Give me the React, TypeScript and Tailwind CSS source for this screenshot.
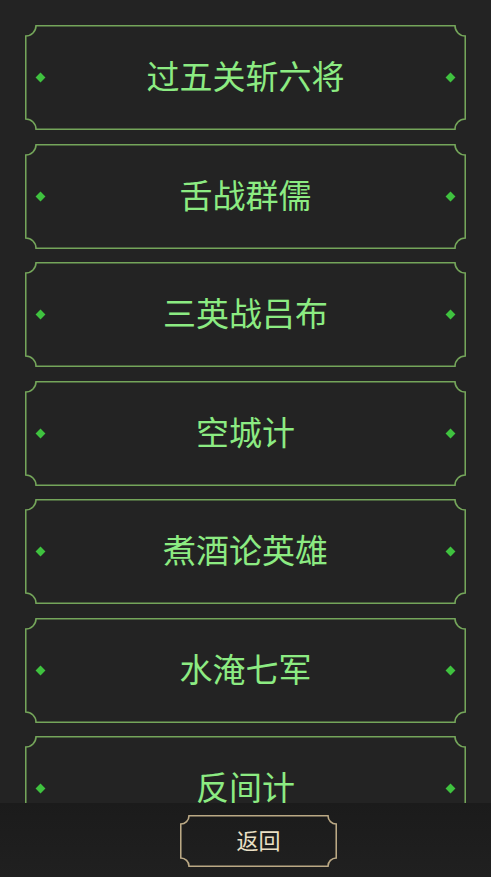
import React from "react";

const stories = ["过五关斩六将", "舌战群儒", "三英战吕布", "空城计", "煮酒论英雄", "水淹七军", "反间计"];

function notchedPath(w: number, h: number, r: number) {
  const o = 0.75;
  return [
    `M ${r} ${o}`,
    `L ${w - r} ${o}`,
    `A ${r - o} ${r - o} 0 0 0 ${w - o} ${r}`,
    `L ${w - o} ${h - r}`,
    `A ${r - o} ${r - o} 0 0 0 ${w - r} ${h - o}`,
    `L ${r} ${h - o}`,
    `A ${r - o} ${r - o} 0 0 0 ${o} ${h - r}`,
    `L ${o} ${r}`,
    `A ${r - o} ${r - o} 0 0 0 ${r} ${o}`,
    "Z",
  ].join(" ");
}

function Frame({ w, h, r, color }: { w: number; h: number; r: number; color: string }) {
  return (
    <svg className="pointer-events-none absolute inset-0" width={w} height={h} viewBox={`0 0 ${w} ${h}`}>
      <path d={notchedPath(w, h, r)} fill="none" stroke={color} strokeWidth={1.6} />
    </svg>
  );
}

function StoryCard({ title }: { title: string }) {
  return (
    <div className="relative flex h-[105px] w-[441px] shrink-0 items-center justify-between px-[12px]">
      <Frame w={441} h={105} r={11} color="#74a55a" />
      <span className="h-[7px] w-[7px] rotate-45 bg-[#3fc23f]" />
      <span className="pb-[4px] text-[33px] leading-none text-[#8ceb82]">{title}</span>
      <span className="h-[7px] w-[7px] rotate-45 bg-[#3fc23f]" />
    </div>
  );
}

export default function App() {
  return (
    <div
      className="flex h-[877px] w-[491px] flex-col overflow-hidden bg-[#232323]"
      style={{ fontFamily: '"Noto Sans CJK SC", "Noto Sans", sans-serif' }}
    >
      <div className="flex min-h-0 flex-1 flex-col items-center gap-[13.5px] overflow-hidden pt-[25px]">
        {stories.map((s) => (
          <StoryCard key={s} title={s} />
        ))}
      </div>
      <div className="flex h-[74px] shrink-0 items-start justify-center bg-gradient-to-b from-[#1b1b1b] to-[#202020] pl-[26px] pt-[12px]">
        <button className="relative flex h-[52px] w-[157px] items-center justify-center pb-[4px]">
          <Frame w={157} h={52} r={9} color="#bba985" />
          <span className="text-[22px] leading-none text-[#ebe0c6]">返回</span>
        </button>
      </div>
    </div>
  );
}
